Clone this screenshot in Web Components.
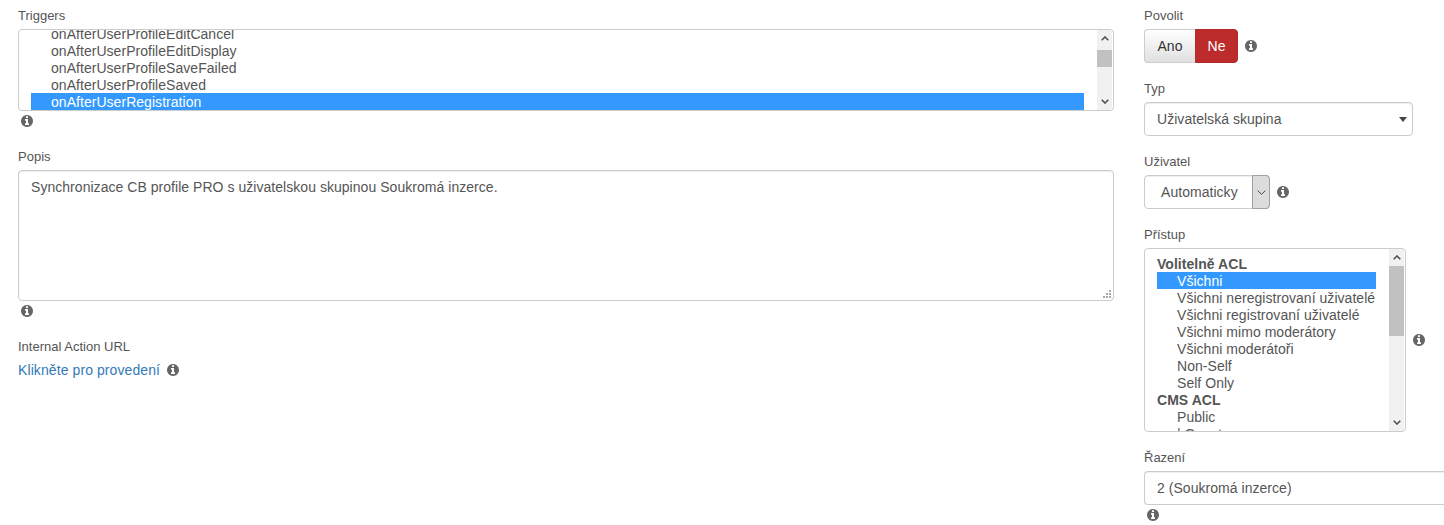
<!DOCTYPE html>
<html lang="cs">
<head>
<meta charset="utf-8">
<title>Plugin</title>
<style>
  html, body { margin: 0; height: 525px; overflow: hidden; background: #fff; }
  body { font: 14px/20px "Liberation Sans", Arial, sans-serif; letter-spacing: .04px; color: #555; }
</style>
</head>
<body>
<plugin-form>
  <div slot="left">
    <form-field label="Triggers" gap="4" nudge>
      <list-box h="82" rows-offset="-5" thumb-top="3" thumb-h="17">
        <list-row indent>onAfterUserProfileEditCancel</list-row>
        <list-row indent>onAfterUserProfileEditDisplay</list-row>
        <list-row indent>onAfterUserProfileSaveFailed</list-row>
        <list-row indent>onAfterUserProfileSaved</list-row>
        <list-row indent selected>onAfterUserRegistration</list-row>
      </list-box>
      <info-icon class="under"></info-icon>
    </form-field>
    <form-field label="Popis" gap="3" style="margin-top:18px">
      <text-area>Synchronizace CB profile PRO s uživatelskou skupinou Soukromá inzerce.</text-area>
      <info-icon class="under"></info-icon>
    </form-field>
    <form-field label="Internal Action URL" gap="3" style="margin-top:18px">
      <div class="inline"><a href="#" style="color:#337ab7;text-decoration:none;letter-spacing:.09px">Klikněte pro provedení</a><info-icon></info-icon></div>
    </form-field>
  </div>
  <div slot="right">
    <form-field label="Povolit" gap="4" nudge>
      <div class="inline"><toggle-buttons></toggle-buttons><info-icon></info-icon></div>
    </form-field>
    <form-field label="Typ" gap="4" nudge style="margin-top:15px">
      <drop-select style="width:269px">Uživatelská skupina</drop-select>
    </form-field>
    <form-field label="Uživatel" gap="4" nudge style="margin-top:15px">
      <div class="inline"><native-select>Automaticky</native-select><info-icon></info-icon></div>
    </form-field>
    <form-field label="Přístup" gap="4" nudge style="margin-top:15px">
      <div class="inline">
        <list-box h="184" w="262" rows-offset="6" thumb-top="0" thumb-h="70">
          <list-row group>Volitelně ACL</list-row>
          <list-row indent selected>Všichni</list-row>
          <list-row indent>Všichni neregistrovaní uživatelé</list-row>
          <list-row indent>Všichni registrovaní uživatelé</list-row>
          <list-row indent>Všichni mimo moderátory</list-row>
          <list-row indent>Všichni moderátoři</list-row>
          <list-row indent>Non-Self</list-row>
          <list-row indent>Self Only</list-row>
          <list-row group>CMS ACL</list-row>
          <list-row indent>Public</list-row>
          <list-row indent>| Guest</list-row>
        </list-box>
        <info-icon></info-icon>
      </div>
    </form-field>
    <form-field label="Řazení" gap="4" nudge style="margin-top:15px">
      <text-input>2 (Soukromá inzerce)</text-input>
      <info-icon class="under"></info-icon>
    </form-field>
  </div>
</plugin-form>

<script>
  const INFO_PATH = 'M1024 1376v-160q0-14-9-23t-23-9h-96v-512q0-14-9-23t-23-9h-320q-14 0-23 9t-9 23v160q0 14 9 23t23 9h96v320h-96q-14 0-23 9t-9 23v160q0 14 9 23t23 9h448q14 0 23-9t9-23zm-128-896v-160q0-14-9-23t-23-9h-192q-14 0-23 9t-9 23v160q0 14 9 23t23 9h192q14 0 23-9t9-23zm640 416q0 209-103 385.5t-279.5 279.5-385.5 103-385.5-103-279.5-279.5-103-385.5 103-385.5 279.5-279.5 385.5-103 385.5 103 279.5 279.5 103 385.5z';

  class PluginForm extends HTMLElement {
    constructor() {
      super();
      this.attachShadow({ mode: 'open' }).innerHTML = `
      <style>
        :host { display: grid; grid-template-columns: 1096px 300px; column-gap: 30px; padding: 5px 0 0 18px; }
        ::slotted(div) { min-width: 0; }
      </style>
      <slot name="left"></slot>
      <slot name="right"></slot>`;
    }
  }

  class FormField extends HTMLElement {
    constructor() {
      super();
      this.attachShadow({ mode: 'open' }).innerHTML = `
      <style>
        :host { display: block; }
        label { display: block; font-size: 13px; line-height: 20px; letter-spacing: 0; color: #555; }
        ::slotted(.inline) { display: flex; align-items: center; }
        ::slotted(.under) { margin: 4px 0 0 3px; }
      </style>
      <label></label>
      <slot></slot>`;
    }

    connectedCallback() {
      const label = this.shadowRoot.querySelector('label');
      const nudge = this.hasAttribute('nudge') ? 1 : 0;
      label.textContent = this.getAttribute('label');
      label.style.paddingTop = nudge + 'px';
      label.style.marginBottom = (this.getAttribute('gap') - nudge) + 'px';
    }
  }

  class InfoIcon extends HTMLElement {
    constructor() {
      super();
      this.attachShadow({ mode: 'open' }).innerHTML = `
      <style>
        :host { display: block; width: 12px; height: 14px; margin-left: 7px; flex: none; }
        svg { display: block; width: 12px; height: 12px; margin-top: 1px; fill: #666; }
      </style>
      <svg viewBox="0 128 1536 1536"><path d="${INFO_PATH}"/></svg>`;
    }
  }

  class ListBox extends HTMLElement {
    constructor() {
      super();
      this.attachShadow({ mode: 'open' }).innerHTML = `
      <style>
        :host { display: flex; box-sizing: border-box; border: 1px solid #ccc; border-radius: 4px; overflow: hidden; background: #fff; }
        .rows { flex: 1; min-width: 0; overflow: hidden; padding: 0 13px 0 12px; }
        .bar { flex: none; width: 15px; margin-right: 1px; background: #f1f1f1; display: flex; flex-direction: column; }
        .btn { height: 17px; flex: none; display: flex; align-items: center; justify-content: center; }
        .btn svg { width: 8px; height: 5px; fill: none; stroke: #505050; stroke-width: 1.6; }
        .track { flex: 1; position: relative; }
        .thumb { position: absolute; left: 0; right: 0; background: #c1c1c1; }
      </style>
      <div class="rows"><div class="inner"><slot></slot></div></div>
      <div class="bar">
        <div class="btn"><svg viewBox="0 0 8 5"><path d="M.7 4.3 4 1l3.3 3.3"/></svg></div>
        <div class="track"><div class="thumb"></div></div>
        <div class="btn"><svg viewBox="0 0 8 5"><path d="M.7.7 4 4 7.3.7"/></svg></div>
      </div>`;
    }

    connectedCallback() {
      this.style.height = this.getAttribute('h') + 'px';
      if (this.hasAttribute('w')) this.style.width = this.getAttribute('w') + 'px';
      const root = this.shadowRoot;
      root.querySelector('.inner').style.marginTop = this.getAttribute('rows-offset') + 'px';
      const thumb = root.querySelector('.thumb');
      thumb.style.top = this.getAttribute('thumb-top') + 'px';
      thumb.style.height = this.getAttribute('thumb-h') + 'px';
    }
  }

  class ListRow extends HTMLElement {
    constructor() {
      super();
      this.attachShadow({ mode: 'open' }).innerHTML = `
      <style>
        :host { display: block; box-sizing: border-box; height: 17px; padding-top: 1px; font-size: 14px; line-height: 17px; white-space: nowrap; color: #555; }
        :host([indent]) { padding-left: 20px; }
        :host([group]) { font-weight: bold; }
        :host([selected]) { background: #3399ff; color: #fff; }
      </style>
      <slot></slot>`;
    }
  }

  class TextArea extends HTMLElement {
    constructor() {
      super();
      this.attachShadow({ mode: 'open' }).innerHTML = `
      <style>
        :host { display: block; position: relative; box-sizing: border-box; height: 131px; padding: 6px 12px; border: 1px solid #ccc; border-radius: 4px; box-shadow: inset 0 1px 1px rgba(0,0,0,.075); line-height: 20px; }
        svg { position: absolute; right: 1px; bottom: 1px; width: 9px; height: 9px; fill: #a8a8a8; }
      </style>
      <slot></slot>
      <svg viewBox="0 0 9 9"><rect x="6" y="0" width="2" height="2"/><rect x="3" y="3" width="2" height="2"/><rect x="6" y="3" width="2" height="2"/><rect x="0" y="6" width="2" height="2"/><rect x="3" y="6" width="2" height="2"/><rect x="6" y="6" width="2" height="2"/></svg>`;
    }
  }

  class TextInput extends HTMLElement {
    constructor() {
      super();
      this.attachShadow({ mode: 'open' }).innerHTML = `
      <style>
        :host { display: block; box-sizing: border-box; height: 34px; padding: 6px 12px; border: 1px solid #ccc; border-radius: 4px 0 0 4px; border-right: 0; box-shadow: inset 0 1px 1px rgba(0,0,0,.075); line-height: 20px; white-space: nowrap; }
      </style>
      <slot></slot>`;
    }
  }

  class DropSelect extends HTMLElement {
    constructor() {
      super();
      this.attachShadow({ mode: 'open' }).innerHTML = `
      <style>
        :host { display: flex; align-items: center; justify-content: space-between; box-sizing: border-box; height: 34px; padding: 0 5px 0 12px; border: 1px solid #ccc; border-radius: 4px; box-shadow: inset 0 1px 1px rgba(0,0,0,.075); }
        i { width: 0; height: 0; border: 4.5px solid transparent; border-top: 5px solid #444; border-bottom: 0; }
      </style>
      <slot></slot><i></i>`;
    }
  }

  class NativeSelect extends HTMLElement {
    constructor() {
      super();
      this.attachShadow({ mode: 'open' }).innerHTML = `
      <style>
        :host { display: flex; box-sizing: border-box; width: 126px; height: 34px; border: 1px solid #ccc; border-radius: 4px; box-shadow: inset 0 1px 1px rgba(0,0,0,.075); }
        .txt { flex: 1; padding-left: 16px; line-height: 32px; }
        .arr { flex: none; box-sizing: border-box; width: 18px; margin: -1px; display: flex; align-items: center; justify-content: center; background: #dcdcdc; border: 1px solid #a0a0a0; border-radius: 0 4px 4px 0; }
        svg { width: 9px; height: 5px; fill: none; stroke: #444; stroke-width: 1; }
      </style>
      <div class="txt"><slot></slot></div>
      <div class="arr"><svg viewBox="0 0 9 5"><path d="M.7.7 4.5 4.3 8.3.7"/></svg></div>`;
    }
  }

  class ToggleButtons extends HTMLElement {
    constructor() {
      super();
      this.attachShadow({ mode: 'open' }).innerHTML = `
      <style>
        :host { display: flex; height: 34px; line-height: 32px; text-align: center; }
        span { display: block; box-sizing: border-box; }
        .no { width: 51px; border: 1px solid #ccc; border-right: 0; border-radius: 4px 0 0 4px; color: #333; background: linear-gradient(#fff, #e0e0e0); }
        .yes { width: 43px; border: 1px solid #b02a2a; border-radius: 0 4px 4px 0; color: #fff; background: #bd2c2c; }
      </style>
      <span class="no">Ano</span><span class="yes">Ne</span>`;
    }
  }

  customElements.define('plugin-form', PluginForm);
  customElements.define('form-field', FormField);
  customElements.define('info-icon', InfoIcon);
  customElements.define('list-box', ListBox);
  customElements.define('list-row', ListRow);
  customElements.define('text-area', TextArea);
  customElements.define('text-input', TextInput);
  customElements.define('drop-select', DropSelect);
  customElements.define('native-select', NativeSelect);
  customElements.define('toggle-buttons', ToggleButtons);
</script>
</body>
</html>
